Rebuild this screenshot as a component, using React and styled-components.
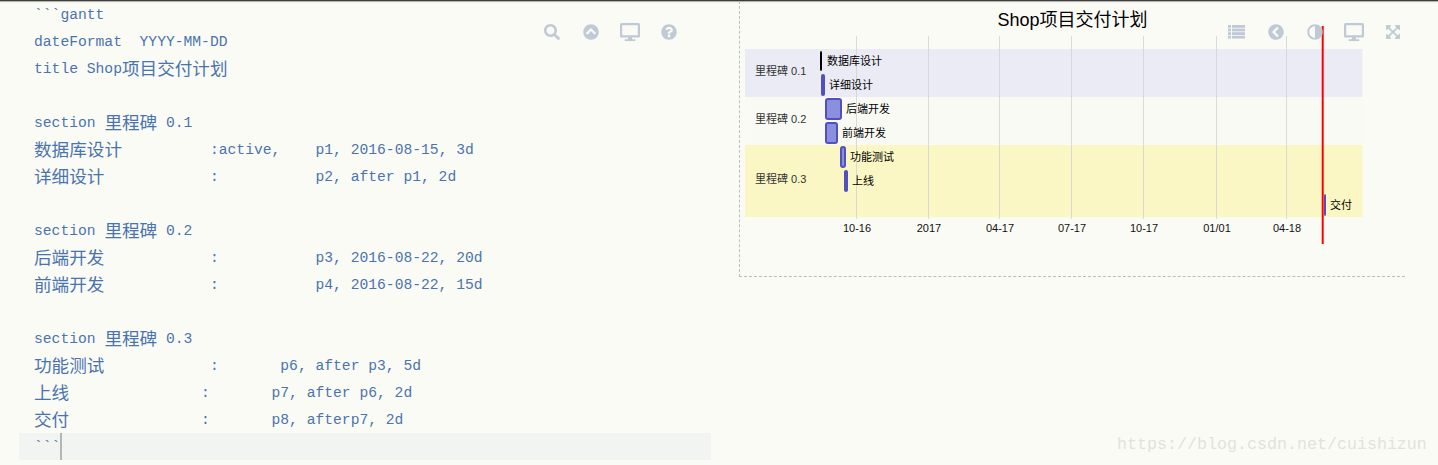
import React from 'react'
import styled, { createGlobalStyle } from 'styled-components'
import {
  FaSearch,
  FaChevronCircleUp,
  FaChevronCircleLeft,
  FaDesktop,
  FaQuestionCircle,
  FaAdjust,
  FaExpandArrowsAlt,
} from 'react-icons/fa'

const GlobalStyle = createGlobalStyle`
  html, body {
    margin: 0;
    padding: 0;
    background: #fbfbf6;
  }
`

const Page = styled.div`
  position: relative;
  width: 1438px;
  height: 465px;
  overflow: hidden;
  background: #fbfbf6;
  font-family: "Liberation Sans", "Noto Sans CJK SC", sans-serif;
`

const TopEdge = styled.div`
  height: 1px;
  background: #3c3c3c;
  box-shadow: 0 1px 1px rgba(0, 0, 0, 0.35);
`

const Panes = styled.div`
  display: flex;
  align-items: flex-start;
`

const Editor = styled.div`
  position: relative;
  width: 739px;
  padding-left: 19px;
  box-sizing: border-box;
`

const Line = styled.div`
  display: flex;
  align-items: center;
  width: 692px;
  height: 27px;
  padding-left: 15px;
  box-sizing: border-box;
  background: ${(p) => (p.$active ? '#f2f4f1' : 'transparent')};
  color: #4a74ad;
  font-family: "Liberation Mono", "Noto Sans CJK SC", monospace;
  font-size: 14.67px;
  white-space: pre;
`

const Han = styled.span`
  font-family: "Noto Sans CJK SC", sans-serif;
  font-size: 17.6px;
  line-height: 1;
  margin-bottom: 2px;
  width: ${(p) => p.$count * 17.6}px;
`

const Cursor = styled.span`
  align-self: stretch;
  width: 2px;
  background: #b4b6b6;
`

const Toolbar = styled.div`
  position: absolute;
  top: 22px;
  left: ${(p) => p.$left};
  display: flex;
  height: 17px;
  color: #bfcad6;
`

const ToolButton = styled.span`
  display: flex;
  align-items: center;
  justify-content: center;
  width: 39px;
`

const MirroredAdjust = styled(FaAdjust)`
  transform: scaleX(-1);
`

const Preview = styled.div`
  position: relative;
  width: 666px;
  height: 276px;
  box-sizing: border-box;
  border-left: 1px dashed #bdbdb9;
  border-bottom: 1px dashed #bdbdb9;
`

const Chart = styled.svg`
  display: block;
`

const Band = styled.rect`
  fill: ${(p) => p.$fill};
`

const GridLine = styled.line`
  stroke: #d3d3d3;
  stroke-opacity: 0.85;
  stroke-width: 1;
`

const NowLine = styled.line`
  stroke: #ff0000;
  stroke-width: 2;
`

const Title = styled.text`
  font-size: 18px;
  fill: #000;
  text-anchor: middle;
`

const AxisLabel = styled.text`
  font-size: 11px;
  fill: #111;
  text-anchor: middle;
`

const SectionLabel = styled.text`
  font-size: 11px;
  fill: #333;
`

const TaskLabel = styled.text`
  font-size: 11px;
  fill: #000;
`

const barFill = { done: '#000', thin: '#534fbc', normal: '#8a90dd' }

const Bar = styled.rect`
  fill: ${(p) => barFill[p.$kind]};
  stroke: ${(p) => (p.$kind === 'normal' ? '#534fbc' : 'none')};
  stroke-width: 2px;
`

const Watermark = styled.div`
  position: absolute;
  left: 1117px;
  top: 435px;
  color: #e2e2dc;
  font-family: "Liberation Mono", monospace;
  font-size: 16.67px;
  line-height: 20px;
`

const source = [
  '```gantt',
  'dateFormat  YYYY-MM-DD',
  'title Shop项目交付计划',
  '',
  'section 里程碑 0.1',
  '数据库设计          :active,    p1, 2016-08-15, 3d',
  '详细设计            :           p2, after p1, 2d',
  '',
  'section 里程碑 0.2',
  '后端开发            :           p3, 2016-08-22, 20d',
  '前端开发            :           p4, 2016-08-22, 15d',
  '',
  'section 里程碑 0.3',
  '功能测试            :       p6, after p3, 5d',
  '上线               :       p7, after p6, 2d',
  '交付               :       p8, afterp7, 2d',
]

const bands = [
  { y: 49, height: 48, fill: '#ebebf5' },
  { y: 97, height: 48, fill: '#fafaf4' },
  { y: 145, height: 72, fill: '#faf7c4' },
]

const sections = [
  { text: '里程碑 0.1', y: 75 },
  { text: '里程碑 0.2', y: 123 },
  { text: '里程碑 0.3', y: 183 },
]

const ticks = [
  { x: 856.5, text: '10-16' },
  { x: 928.5, text: '2017' },
  { x: 999.5, text: '04-17' },
  { x: 1071.5, text: '07-17' },
  { x: 1143.5, text: '10-17' },
  { x: 1216.5, text: '01/01' },
  { x: 1286.5, text: '04-18' },
]

const tasks = [
  { text: '数据库设计', kind: 'done', x: 820, y: 51, w: 2, h: 20, labelX: 827, labelY: 65 },
  { text: '详细设计', kind: 'thin', x: 821, y: 74, w: 4, h: 22, labelX: 829, labelY: 89 },
  { text: '后端开发', kind: 'normal', x: 826, y: 99, w: 15, h: 20, labelX: 846, labelY: 113 },
  { text: '前端开发', kind: 'normal', x: 826, y: 123, w: 11, h: 20, labelX: 842, labelY: 137 },
  { text: '功能测试', kind: 'normal', x: 841, y: 147, w: 4, h: 20, labelX: 850, labelY: 161 },
  { text: '上线', kind: 'thin', x: 844, y: 170, w: 4, h: 22, labelX: 852, labelY: 185 },
  { text: '交付', kind: 'thin', x: 1324, y: 194, w: 2, h: 22, labelX: 1330, labelY: 209 },
]

const splitHan = (text) => text.split(/([\u4e00-\u9fff]+)/).filter(Boolean)

const SourceLine = ({ text }) => (
  <Line>
    {splitHan(text).map((part, i) =>
      /[\u4e00-\u9fff]/.test(part) ? (
        <Han key={i} $count={part.length}>
          {part}
        </Han>
      ) : (
        <span key={i}>{part}</span>
      )
    )}
  </Line>
)

// solid four-row list, the package's list icon has wider gaps
const ListIcon = () => (
  <svg width="17" height="14" viewBox="0 0 17 14" fill="currentColor">
    {[0, 3.6, 7.2, 10.8].map((y) => (
      <g key={y}>
        <rect x="0" y={y} width="3" height="2.8" />
        <rect x="4" y={y} width="13" height="2.8" />
      </g>
    ))}
  </svg>
)

const App = () => {
  return (
    <Page>
      <GlobalStyle />
      <TopEdge />
      <Panes>
        <Editor>
          {source.map((text, i) => (
            <SourceLine key={i} text={text || ' '} />
          ))}
          <Line $active>
            <span>```</span>
            <Cursor />
          </Line>
          <Toolbar $left="532px">
            <ToolButton><FaSearch size={16} /></ToolButton>
            <ToolButton><FaChevronCircleUp size={16} /></ToolButton>
            <ToolButton><FaDesktop size={20} /></ToolButton>
            <ToolButton><FaQuestionCircle size={16} /></ToolButton>
          </Toolbar>
        </Editor>
        <Preview>
          <Chart width="665" height="275" viewBox="740 1 665 275">
            {bands.map((b) => (
              <Band key={b.y} x="745" y={b.y} width="617.5" height={b.height} $fill={b.fill} />
            ))}
            {ticks.map((t) => (
              <GridLine key={t.x} x1={t.x} x2={t.x} y1="36" y2="219" />
            ))}
            <Title x="1072.5" y="26">Shop项目交付计划</Title>
            {ticks.map((t) => (
              <AxisLabel key={t.x} x={t.x + 0.5} y="232">{t.text}</AxisLabel>
            ))}
            {sections.map((s) => (
              <SectionLabel key={s.y} x="755" y={s.y}>{s.text}</SectionLabel>
            ))}
            {tasks.map((t) => (
              <g key={t.text}>
                <Bar x={t.x} y={t.y} width={t.w} height={t.h} rx="2" ry="2" $kind={t.kind} />
                <TaskLabel x={t.labelX} y={t.labelY}>{t.text}</TaskLabel>
              </g>
            ))}
            <NowLine x1="1322.7" x2="1322.7" y1="26" y2="244" />
          </Chart>
          <Toolbar $left="477px">
            <ToolButton><ListIcon /></ToolButton>
            <ToolButton><FaChevronCircleLeft size={16} /></ToolButton>
            <ToolButton><MirroredAdjust size={16} /></ToolButton>
            <ToolButton><FaDesktop size={20} /></ToolButton>
            <ToolButton><FaExpandArrowsAlt size={16} /></ToolButton>
          </Toolbar>
        </Preview>
      </Panes>
      <Watermark>https://blog.csdn.net/cuishizun</Watermark>
    </Page>
  )
}

export default App
